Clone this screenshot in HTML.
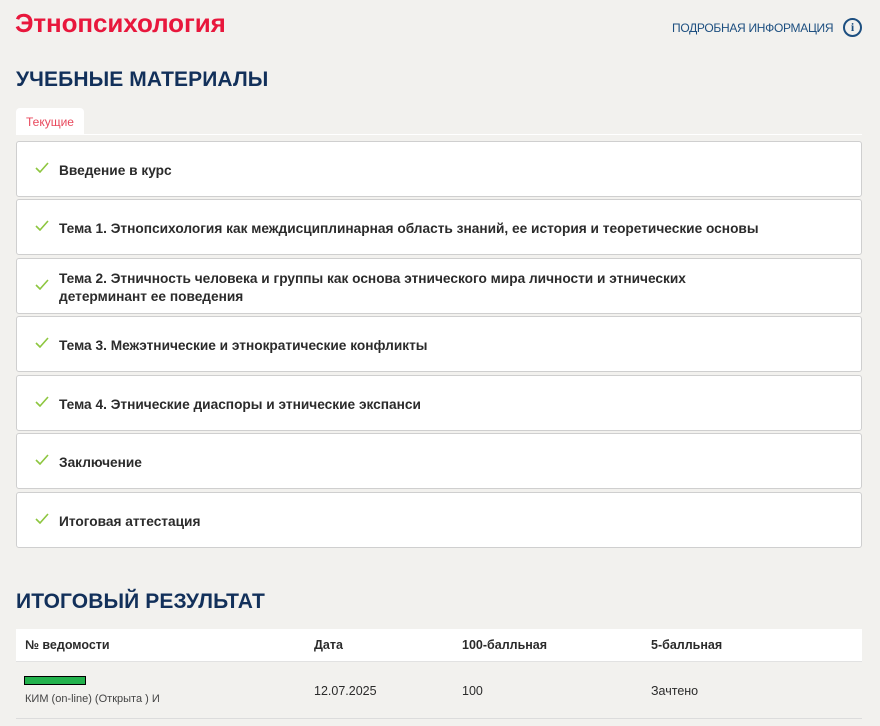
<!DOCTYPE html>
<html><head><meta charset="utf-8"><style>
*{box-sizing:border-box;margin:0;padding:0}
body{width:880px;height:726px;background:#f2f1ee;font-family:"Liberation Sans","Noto Sans CJK SC",sans-serif;position:relative;overflow:hidden;color:#2b2b2b}
.title{position:absolute;left:15px;top:8px;font-size:26px;font-weight:bold;color:#e8173c;letter-spacing:-0.1px}
.info{position:absolute;left:672px;top:21px;font-size:12px;color:#1d4f80;letter-spacing:-0.3px;white-space:nowrap}
.ic{position:absolute;left:843px;top:18px;width:19px;height:19px;border:2px solid #1d4f80;border-radius:50%;color:#1d4f80;font-size:12px;font-weight:bold;text-align:center;line-height:15px;font-family:"Liberation Serif",serif}
h2{position:absolute;left:16px;font-size:21px;font-weight:bold;color:#12305a;letter-spacing:0.1px}
.tab{position:absolute;left:16px;top:108px;width:68px;height:26px;background:#fff;border-radius:4px 4px 0 0;color:#e8485c;font-size:12px;padding:7px 0 0 10px}
.line{position:absolute;left:16px;top:134px;width:846px;height:1px;background:#fff}
.card{position:absolute;left:16px;width:846px;height:56px;background:#fff;border:1px solid #cfcfcf;border-radius:3px;font-size:13.7px;font-weight:bold;color:#2b2b2b;display:flex;align-items:center;padding-left:42px;padding-top:3px;line-height:18px}
.card svg{position:absolute;left:18px;top:50%;margin-top:-7px}
.th{position:absolute;top:629px;left:16px;width:846px;height:33px;background:#fff;border-bottom:1px solid #e2e2e2;font-size:12.5px;font-weight:bold}
.tr{position:absolute;top:662px;left:16px;width:846px;height:57px;border-bottom:1px solid #dcdcdc;font-size:12.5px}
.c{position:absolute}
</style></head><body>
<div class="title">Этнопсихология</div>
<div class="info">ПОДРОБНАЯ ИНФОРМАЦИЯ</div>
<div class="ic">i</div>
<h2 style="top:68px">УЧЕБНЫЕ МАТЕРИАЛЫ</h2>
<div class="tab">Текущие</div>
<div class="line"></div>

<div class="card" style="top:141px"><svg width="14" height="11" viewBox="0 0 14 11"><path d="M1 6l4 4L13 1" fill="none" stroke="#8dc63f" stroke-width="1.6"/></svg>Введение в курс</div>
<div class="card" style="top:199px"><svg width="14" height="11" viewBox="0 0 14 11"><path d="M1 6l4 4L13 1" fill="none" stroke="#8dc63f" stroke-width="1.6"/></svg>Тема 1. Этнопсихология как междисциплинарная область знаний, ее история и теоретические основы</div>
<div class="card" style="top:258px"><svg width="14" height="11" viewBox="0 0 14 11"><path d="M1 6l4 4L13 1" fill="none" stroke="#8dc63f" stroke-width="1.6"/></svg>Тема 2. Этничность человека и группы как основа этнического мира личности и этнических<br>детерминант ее поведения</div>
<div class="card" style="top:316px"><svg width="14" height="11" viewBox="0 0 14 11"><path d="M1 6l4 4L13 1" fill="none" stroke="#8dc63f" stroke-width="1.6"/></svg>Тема 3. Межэтнические и этнократические конфликты</div>
<div class="card" style="top:375px"><svg width="14" height="11" viewBox="0 0 14 11"><path d="M1 6l4 4L13 1" fill="none" stroke="#8dc63f" stroke-width="1.6"/></svg>Тема 4. Этнические диаспоры и этнические экспанси</div>
<div class="card" style="top:433px"><svg width="14" height="11" viewBox="0 0 14 11"><path d="M1 6l4 4L13 1" fill="none" stroke="#8dc63f" stroke-width="1.6"/></svg>Заключение</div>
<div class="card" style="top:492px"><svg width="14" height="11" viewBox="0 0 14 11"><path d="M1 6l4 4L13 1" fill="none" stroke="#8dc63f" stroke-width="1.6"/></svg>Итоговая аттестация</div>

<h2 style="top:590px">ИТОГОВЫЙ РЕЗУЛЬТАТ</h2>
<div class="th">
<span class="c" style="left:9px;top:9px">№ ведомости</span>
<span class="c" style="left:298px;top:9px">Дата</span>
<span class="c" style="left:446px;top:9px">100-балльная</span>
<span class="c" style="left:635px;top:9px">5-балльная</span>
</div>
<div class="tr">
<div class="c" style="left:8px;top:14px;width:62px;height:9px;background:#22b14c;border:1px solid #000"></div>
<span class="c" style="left:9px;top:31px;font-size:11px;color:#444">КИМ (on-line) (Открыта ) И</span>
<span class="c" style="left:298px;top:22px">12.07.2025</span>
<span class="c" style="left:446px;top:22px">100</span>
<span class="c" style="left:635px;top:22px">Зачтено</span>
</div>
</body></html>
